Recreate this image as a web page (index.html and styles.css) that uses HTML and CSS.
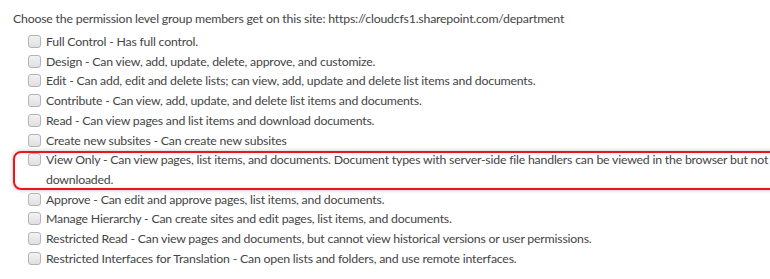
FILE: index.html
```html
<!DOCTYPE html>
<html lang="en">
<head>
    <meta charset="UTF-8">
    <title>Permission Levels</title>
    <link rel="stylesheet" href="styles.css">
</head>
<body>
    <div class="permissions">
        <p class="intro">Choose the permission level group members get on this site: https://cloudcfs1.sharepoint.com/department</p>
        <ul class="levels">
            <li><input type="checkbox"><span>Full Control - Has full control.</span></li>
            <li><input type="checkbox"><span>Design - Can view, add, update, delete, approve, and customize.</span></li>
            <li><input type="checkbox"><span>Edit - Can add, edit and delete lists; can view, add, update and delete list items and documents.</span></li>
            <li><input type="checkbox"><span>Contribute - Can view, add, update, and delete list items and documents.</span></li>
            <li><input type="checkbox"><span>Read - Can view pages and list items and download documents.</span></li>
            <li><input type="checkbox"><span>Create new subsites - Can create new subsites</span></li>
            <li class="highlight"><input type="checkbox"><span>View Only - Can view pages, list items, and documents. Document types with server-side file handlers can be viewed in the browser but not downloaded.</span></li>
            <li><input type="checkbox"><span>Approve - Can edit and approve pages, list items, and documents.</span></li>
            <li><input type="checkbox"><span>Manage Hierarchy - Can create sites and edit pages, list items, and documents.</span></li>
            <li><input type="checkbox"><span>Restricted Read - Can view pages and documents, but cannot view historical versions or user permissions.</span></li>
            <li><input type="checkbox"><span>Restricted Interfaces for Translation - Can open lists and folders, and use remote interfaces.</span></li>
        </ul>
    </div>
</body>
</html>
```

FILE: styles.css
```css
/* Global Styles */
* {
    margin: 0;
    padding: 0;
    box-sizing: border-box;
}

body {
    background-color: white;
    color: #444;
    font-family: Lato, "Open Sans", sans-serif;
    font-size: 12.3px;
    letter-spacing: -0.2px;
    overflow: hidden;
}

.permissions {
    padding: 10px 0 0 13px;
    width: 790px; /* the page runs on past the right edge of the shot */
}

.intro {
    line-height: 17px;
    margin-bottom: 5px;
}

/* Permission list */
.levels {
    list-style: none;
    padding-left: 15px;
    padding-right: 8px;
}

.levels li {
    display: flex;
    align-items: flex-start;
    line-height: 19.7px;
    position: relative;
}

.levels input {
    appearance: none;
    -webkit-appearance: none;
    flex: none;
    width: 13px;
    height: 13px;
    margin: 3px 5px 0 0;
    border: 1px solid #b4b4b4;
    border-radius: 3px;
    background: linear-gradient(#f2f2f2, #e0e0e0);
}

/* Red annotation box round the View Only row */
.levels li.highlight::after {
    content: "";
    position: absolute;
    top: 1px;
    bottom: 0;
    left: -15px;
    right: -20px;
    border: 2px solid #e8161e;
    border-radius: 8px;
    box-shadow: 0 0 4px rgba(0, 0, 0, 0.25), inset 0 0 3px rgba(0, 0, 0, 0.15);
}
```
